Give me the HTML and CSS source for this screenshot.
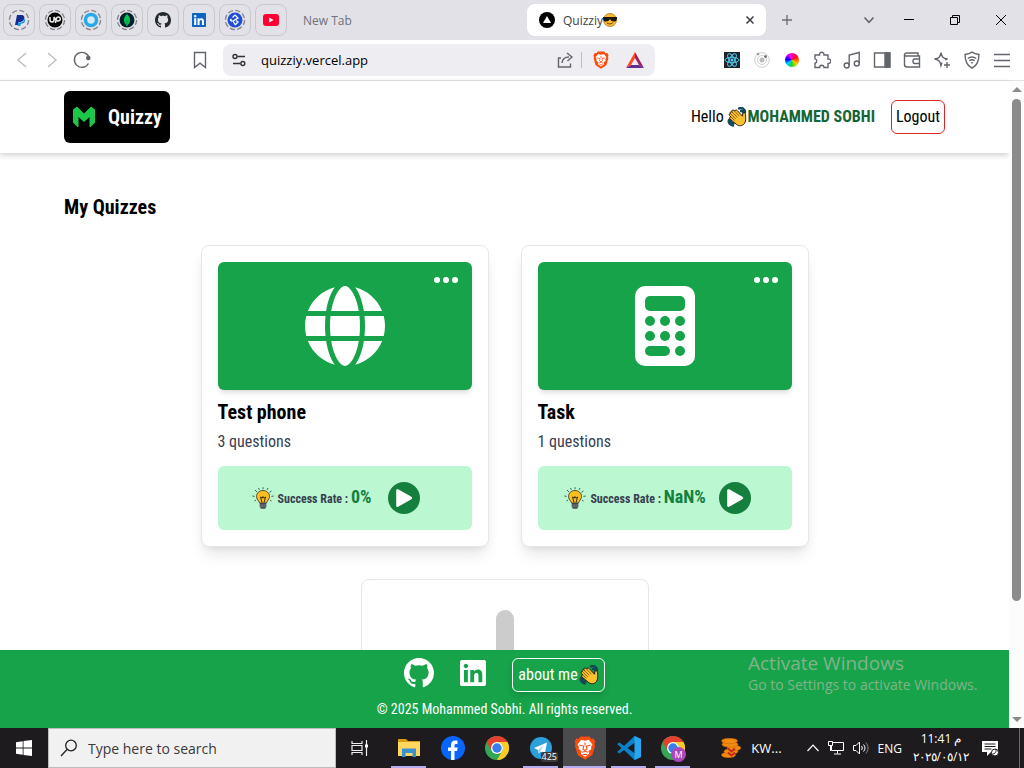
FILE: index.html
```html
<!DOCTYPE html>
<html lang="en">
<head>
<meta charset="utf-8">
<meta name="viewport" content="width=device-width, initial-scale=1">
<title>Quizziy</title>
<link rel="stylesheet" href="styles.css">
</head>
<body>
<svg class="defs" aria-hidden="true">
  <symbol id="github" viewBox="0 0 16 16"><path d="M8 0C3.58 0 0 3.58 0 8c0 3.54 2.29 6.53 5.47 7.59.4.07.55-.17.55-.38 0-.19-.01-.82-.01-1.49-2.01.37-2.53-.49-2.69-.94-.09-.23-.48-.94-.82-1.13-.28-.15-.68-.52-.01-.53.63-.01 1.08.58 1.23.82.72 1.21 1.87.87 2.33.66.07-.52.28-.87.51-1.07-1.78-.2-3.64-.89-3.64-3.95 0-.87.31-1.59.82-2.15-.08-.2-.36-1.02.08-2.12 0 0 .67-.21 2.2.82.64-.18 1.32-.27 2-.27s1.36.09 2 .27c1.53-1.04 2.2-.82 2.2-.82.44 1.1.16 1.92.08 2.12.51.56.82 1.27.82 2.15 0 3.07-1.87 3.75-3.65 3.95.29.25.54.73.54 1.48 0 1.07-.01 1.93-.01 2.2 0 .21.15.46.55.38A8.01 8.01 0 0 0 16 8c0-4.42-3.58-8-8-8z"/></symbol>
  <symbol id="linkedin" viewBox="0 32 448 448"><path d="M416 32H31.9C14.3 32 0 46.5 0 64.3v383.4C0 465.5 14.3 480 31.9 480H416c17.6 0 32-14.5 32-32.3V64.3c0-17.8-14.4-32.3-32-32.3zM135.4 416H69V202.2h66.5V416zm-33.2-243c-21.3 0-38.5-17.3-38.5-38.5S80.9 96 102.2 96c21.2 0 38.5 17.3 38.5 38.5 0 21.3-17.2 38.5-38.5 38.5zm282.1 243h-66.4V312c0-24.8-.5-56.7-34.5-56.7-34.6 0-39.9 27-39.9 54.9V416h-66.4V202.2h63.7v29.2h.9c8.9-16.8 30.6-34.5 62.9-34.5 67.2 0 79.7 44.3 79.7 101.9V416z"/></symbol>
  <symbol id="ring" viewBox="0 0 24 24"><circle cx="12" cy="12" r="9.6" fill="none" stroke="#85858b" stroke-width="1.3" stroke-dasharray="5.2 2.34"/></symbol>
  <symbol id="hand" viewBox="0 0 20 20">
    <path d="M12 1.500c2.500-1.500 6 .5 6 4M14 4c1.500-.2 2 .6 2.500 2M2 13c-1 2.500 1 5 4 5.500M3.500 13c0 2 1 3 3 3.500" fill="none" stroke="#14485a" stroke-width="2.400" stroke-linecap="round"/>
    <path d="M3.200 5.300c.8-.8 1.600-.5 2.200.1l-.5-.9c-.5-1 .9-2.200 2-1.200l1 .8c.2-1.300 1.700-1.500 2.400-.5l5.200 5.600c.2-1.700 0-3 1.200-3.400 1.300-.4 1.900 1 1.900 2.300.1 3.500.6 6.300-1.300 8.600-2.200 2.600-5.600 2.600-8 .6L3 12c-1-1-.2-2.300.9-2L2.500 8.500c-1-1.100 0-2.200 1.100-1.900-.8-.4-.8-.9-.4-1.300z" fill="#fbc02d" stroke="#241b0d" stroke-width="1"/>
    <path d="M5.300 5.500l5 4.800M7.500 4.100l4.800 4.900M3.700 7l5 4.700M4 10l3.500 3.200" fill="none" stroke="#6e4b0c" stroke-width=".8"/>
  </symbol>
  <symbol id="bulb" viewBox="0 0 22 22">
    <path d="M3 3l2 2M6.500 1l.8 1.800M11 .2v2M16 1l-.9 1.800M19.500 4l-2 1.300M.3 9l2.300.4M21.700 9l-2.300.4M2.500 14l1.600-1M19.500 14L18 13" stroke="#344d48" stroke-width=".9"/>
    <path d="M11 3.500c-4 0-6.500 2.700-6.500 6 0 3 2.500 4 3 6.500h7c.5-2.500 3-3.500 3-6.500 0-3.300-2.500-6-6.500-6z" fill="#fbbd20" stroke="#453f2a" stroke-width=".9"/>
    <path d="M10 15.500L8.500 10l1.700 1.200L11 9.500l1 1.700 1.600-1.200-1.500 5.500" fill="none" stroke="#3c3215" stroke-width="1"/>
    <path d="M7.700 16h6.600v4L13 21.700H9L7.700 20z" fill="#40474d"/><path d="M8 18h6M8 19.800h6" stroke="#8b9595" stroke-width=".7"/>
  </symbol>
  <symbol id="play" viewBox="0 0 32 32"><circle cx="16" cy="16" r="16" fill="#15803d"/><path d="M9.500 8.500v15.200L22.800 16z" fill="#fff" stroke="#fff" stroke-width="2.600" stroke-linejoin="round"/></symbol>
  <symbol id="brave" viewBox="0 0 20 22">
    <path d="M6 .5h8l1.800 2 2-.2L19.500 5l-.8 2 .5 2.200-2.500 8.300L10 21.800l-6.700-4.300L.8 9.200 1.300 7 .5 5l1.700-2.700 2 .2z" fill="#fb4b0e"/>
    <path d="M6.500 3.500L10 4.300l3.500-.8 3.300 4.200-1.300 2.500.3 1.800-2.700 2 .7 2.200L10 19l-3.800-2.800.7-2.200-2.700-2 .3-1.800-1.300-2.500z" fill="#fff"/>
    <path d="M4.800 8.200l4 1-.6 2.800 1.800 1.300 1.800-1.300-.6-2.800 4-1M10 6v2.500M7.500 15l2.500-1.300 2.500 1.300M8 17h4" fill="none" stroke="#fb4b0e" stroke-width="1"/>
  </symbol>
  <symbol id="chrome" viewBox="0 0 24 24">
    <circle cx="12" cy="12" r="12" fill="#35a653"/>
    <path d="M12 0a12 12 0 0 1 10.400 6H12a6 6 0 0 0-5.200 9L1.600 6A12 12 0 0 1 12 0z" fill="#e5402e"/>
    <path d="M22.400 6A12 12 0 0 1 12 24l5.200-9A6 6 0 0 0 12 6z" fill="#fdca24"/>
    <circle cx="12" cy="12" r="6" fill="#fff"/><circle cx="12" cy="12" r="4.700" fill="#397cec"/>
  </symbol>
</svg>

<div class="tabstrip">
  <div class="pinned">
    <button class="pin" aria-label="PayPal"><svg><use href="#ring"/><path d="M10 7h4c3 0 4 2 3 4.300-.7 2-2 2.700-4 2.700h-1.500L11 17H8z" fill="#142c8e"/><path d="M12.500 14.500c3 0 4.800-1 5-4 .8 1 .9 2 .4 3-.6 1.500-2 2.200-4 2.200L13.200 18h-2.700l.6-3.500z" fill="#1894e6"/></svg></button>
    <button class="pin" aria-label="Upwork"><svg><use href="#ring"/><circle cx="12" cy="12" r="7.500" fill="#050505"/><path d="M7 9v3c0 2.500 4 2.500 4 0V9c1 2 2 4 4 4 3 0 3-4 .3-4-2 0-2.300 2-2.800 6" fill="none" stroke="#eee" stroke-width="1.500"/></svg></button>
    <button class="pin" aria-label="Circle"><svg><use href="#ring"/><circle cx="12" cy="12" r="5.500" fill="#d8eaf3" stroke="#25a9e8" stroke-width="3.500"/></svg></button>
    <button class="pin" aria-label="MongoDB"><svg><use href="#ring"/><circle cx="12" cy="12" r="7.500" fill="#02202d"/><path d="M12 6c4 4 4 8 0 12-4-4-4-8 0-12z" fill="#00c853"/><path d="M12 12v6" stroke="#059243"/></svg></button>
    <button class="pin" aria-label="GitHub"><svg><use href="#github" x="4" y="4" width="16" height="16" fill="#24292e"/></svg></button>
    <button class="pin" aria-label="LinkedIn"><svg><rect x="6" y="6" width="12" height="12" fill="#fff"/><use href="#linkedin" x="5" y="5" width="14" height="14" fill="#0a66c2"/></svg></button>
    <button class="pin" aria-label="Diamond"><svg><use href="#ring"/><circle cx="12" cy="12" r="7.500" fill="#1d4fd6"/><path d="M12 7l3 3-5 3 2 3.500M12 7l-2.500 2.500M12 17l3-3-2-1.500M8.500 11l-1 1 1.500 1.500" fill="none" stroke="#fff" stroke-width="1.300"/></svg></button>
    <button class="pin" aria-label="YouTube"><svg><rect x="4" y="6" width="16" height="12" rx="3" fill="#ff0033"/><path d="M10.200 9.500v5l4.400-2.500z" fill="#fff"/></svg></button>
  </div>
  <div class="tab">New Tab</div>
  <div class="tab tab-active">
    <svg width="16" height="16" viewBox="0 0 16 16"><circle cx="8" cy="8" r="8"/><path d="M8 4l4 7H4z" fill="#fff"/></svg>
    <span class="tab-title">Quizziy<svg width="14" height="14" viewBox="0 0 14 14" role="img" aria-label="cool face"><circle cx="7" cy="7" r="6.500" fill="#fdb92e" stroke="#9c6415" stroke-width=".7"/><path d="M0 4h14v1.500c-.6 2.700-1.400 3-3 3-1.700 0-2.900-.7-4-2.500-1.100 1.800-2.300 2.500-4 2.500-1.600 0-2.400-.3-3-3z" fill="#191919"/><path d="M4 10c2 1.300 4.500 1.200 6-.5" fill="none" stroke="#6d3f09"/></svg></span>
    <button class="plain" aria-label="Close tab"><svg width="10" height="10" viewBox="0 0 10 10"><path d="M1.500 1.500l7 7M8.500 1.500l-7 7" stroke="#3f4146" stroke-width="1.600"/></svg></button>
  </div>
  <button class="plain newtab" aria-label="New tab"><svg width="12" height="12" viewBox="0 0 12 12"><path d="M6 1v10M1 6h10" stroke="#6b6d73" stroke-width="1.300"/></svg></button>
  <div class="window-buttons">
    <button class="plain" aria-label="Search tabs"><svg width="12" height="12" viewBox="0 0 12 12"><path d="M1.500 3.500L6 8.300l4.500-4.800" fill="none" stroke="#606269" stroke-width="1.500"/></svg></button>
    <button class="plain" aria-label="Minimize"><svg width="12" height="12" viewBox="0 0 12 12"><path d="M1 5.500h10" stroke="#000"/></svg></button>
    <button class="plain" aria-label="Restore"><svg width="12" height="12" viewBox="0 0 12 12"><path d="M1.500 3.500h7v7h-7zM3.500 3V1.500h7v7H9" fill="none" stroke="#000"/></svg></button>
    <button class="plain" aria-label="Close"><svg width="12" height="12" viewBox="0 0 12 12"><path d="M1 1l10 10M11 1L1 11" stroke="#000"/></svg></button>
  </div>
</div>

<div class="toolbar">
  <div class="nav">
    <button class="plain" aria-label="Back"><svg class="i20 faint"><path d="M14 3L6 10l8 7"/></svg></button>
    <button class="plain" aria-label="Forward"><svg class="i20 faint"><path d="M6 3l8 7-8 7"/></svg></button>
    <button class="plain" aria-label="Reload"><svg class="i20"><path d="M16.500 13.500a7.500 7.500 0 1 1 .8-5"/><circle cx="16.300" cy="8" r="1.600" fill="#62656c"/></svg></button>
    <button class="plain bookmark" aria-label="Bookmark"><svg class="i20"><path d="M4.500 2.500h11v15L10 13.200l-5.500 4.300z"/></svg></button>
  </div>
  <div class="address">
    <svg class="i16"><path d="M6.500 4.500H14M2 11.500h7" stroke="#303238"/><circle cx="4" cy="4.500" r="2" stroke="#303238"/><circle cx="11.800" cy="11.500" r="2" stroke="#303238"/></svg>
    <input class="url" type="text" value="quizziy.vercel.app" aria-label="Address">
    <button class="plain" aria-label="Share"><svg class="i16"><path d="M4 6H1.500v9h12v-3.500M5 11c.4-4 3-6 7-6M10 1l5 4-4.500 4" /></svg></button>
    <span class="divider"></span>
    <button class="plain" aria-label="Brave Shields"><svg width="16" height="18"><use href="#brave"/></svg></button>
    <button class="plain" aria-label="Rewards"><svg width="18" height="16" viewBox="0 0 18 16"><path d="M9 0L0 16l5-3 4-7z" fill="#ff4724"/><path d="M9 0l9 16-5-3-4-7z" fill="#9e1f63"/><path d="M0 16h18l-5-3H5z" fill="#662d91"/></svg></button>
  </div>
  <div class="extensions">
    <button class="plain" aria-label="React tools"><svg width="16" height="16" viewBox="0 0 16 16"><path fill="#20232a" d="M0 0h16v16H0z"/><g fill="none" stroke="#53c9ec"><ellipse cx="8" cy="8" rx="7" ry="2.700"/><ellipse cx="8" cy="8" rx="7" ry="2.700" transform="rotate(60 8 8)"/><ellipse cx="8" cy="8" rx="7" ry="2.700" transform="rotate(120 8 8)"/></g><circle cx="8" cy="8" r="1.500" fill="#53c9ec"/></svg></button>
    <button class="plain" aria-label="Orbit"><svg width="16" height="16" viewBox="0 0 16 16"><g fill="none" stroke="#cfcfcf"><circle cx="8" cy="8" r="7.300"/><circle cx="8" cy="8" r="4.500"/></g><circle cx="8" cy="8" r="2.500" fill="#bdbdbd"/><circle cx="11.500" cy="4.500" r="1.500" fill="#777"/><circle cx="4" cy="2" r="1.300" fill="#999"/></svg></button>
    <button class="plain" aria-label="Color picker"><span class="wheel"></span></button>
    <button class="plain" aria-label="Extensions"><svg class="i18"><path d="M2 4h4.500a2.300 2.300 0 1 1 4.500 0h4v4a2.300 2.300 0 1 1 0 4.500v4h-4a2.200 2.200 0 0 0-4.400 0H2v-4.300a2.200 2.200 0 0 0 0-4.300z"/></svg></button>
    <button class="plain" aria-label="Media"><svg class="i18"><circle cx="3.700" cy="14.500" r="2.500"/><circle cx="13.800" cy="12.500" r="2.500"/><path d="M6.200 14.500V4l10-2.500v11"/></svg></button>
    <button class="plain" aria-label="Sidebar"><svg class="i18"><path d="M1.500 2h15v14h-15z"/><path d="M12 2h5v14h-5z" fill="#62656c"/></svg></button>
    <button class="plain" aria-label="Wallet"><svg class="i18"><path d="M15 5V2H3.500C2 2 1.500 3 1.500 4v9.500c0 1.500 1 2.500 2.500 2.500h12.500V5H3C2 5 1.500 4.500 1.500 3.500M16.500 8h-5c-2 0-2 4.500 0 4.500h5"/></svg></button>
    <button class="plain" aria-label="Leo"><svg class="i18"><path d="M8 1.500c.8 4.500 2 5.800 6.500 6.500l-2.500.8M8 1.500C7.200 6 6 7.300 1.500 8 6 8.800 7.200 10.200 8 14.500l1-3M14 11v6M11 14h6"/></svg></button>
    <button class="plain" aria-label="VPN"><svg class="i18"><path d="M9 1.200c2.500 1.600 4.700 2 7 2.300-.3 6.500-1.500 10.500-7 13.700C3.500 14 2.300 10 2 3.500 4.300 3.200 6.500 2.800 9 1.200zM4.800 7.500c2.700-2 5.700-2 8.400 0M6.300 9.800c1.800-1.300 3.600-1.300 5.400 0M8 12c.7-.5 1.300-.5 2 0"/></svg></button>
    <button class="plain" aria-label="Menu"><svg class="i18"><path d="M1 3.500h16M1 9.500h16M1 15.500h16"/></svg></button>
  </div>
</div>

<div class="viewport">
  <div class="page">
    <header class="header">
      <a class="logo" href="#"><svg width="22" height="22" viewBox="0 0 22 22"><path d="M0 3.500L4 .5l7 7 7-7 4 3v13L17.500 21h-1V11L11 16l-5.500-5v10h-1L0 16.500z" fill="#1cc649"/></svg><span>Quizzy</span></a>
      <div class="account">
        <p class="hello">Hello <svg width="20" height="20"><use href="#hand"/></svg><strong>MOHAMMED SOBHI</strong></p>
        <button class="logout">Logout</button>
      </div>
    </header>
    <main class="main">
      <h1 class="heading">My Quizzes</h1>
      <div class="cards">
        <article class="card">
          <div class="tile">
            <svg width="80" height="80" viewBox="0 0 512 512" fill="#fff"><path d="M352 256c0 22.200-1.200 43.600-3.300 64H163.300c-2.200-20.400-3.300-41.800-3.300-64s1.200-43.600 3.300-64h185.300c2.200 20.400 3.300 41.800 3.300 64zm28.800-64H503.900c5.300 20.500 8.100 41.900 8.100 64s-2.800 43.500-8.100 64H380.800c2.100-20.600 3.200-42 3.200-64s-1.100-43.400-3.200-64zm112.600-32H376.700c-10-63.900-29.800-117.400-55.300-151.600 78.300 20.700 142 77.500 171.900 151.600zm-149.100 0H167.700c6.100-36.400 15.500-68.600 27-94.700 10.500-23.600 22.200-40.700 33.500-51.500C239.400 3.200 248.700 0 256 0s16.600 3.200 27.800 13.800c11.300 10.800 23 27.900 33.500 51.500 11.600 26 20.900 58.200 27 94.700zm-209 0H18.600C48.600 85.900 112.200 29.100 190.600 8.400 165.100 42.600 145.300 96.100 135.300 160zM8.100 192H131.200c-2.100 20.600-3.200 42-3.200 64s1.100 43.400 3.200 64H8.100C2.800 299.500 0 278.100 0 256s2.800-43.500 8.100-64zM194.700 446.600c-11.600-26-20.900-58.200-27-94.600H344.300c-6.100 36.400-15.500 68.600-27 94.600-10.500 23.600-22.200 40.700-33.500 51.500C272.600 508.800 263.300 512 256 512s-16.600-3.200-27.800-13.800c-11.300-10.800-23-27.900-33.500-51.500zM135.300 352c10 63.900 29.800 117.400 55.300 151.600C112.200 482.900 48.600 426.100 18.600 352H135.300zm358.100 0c-30 74.100-93.600 130.900-171.900 151.600 25.500-34.200 45.200-87.700 55.300-151.600H493.400z"/></svg>
            <button class="plain more" aria-label="More options"><svg width="24" height="6" viewBox="0 0 24 6" fill="#fff"><circle cx="3" cy="3" r="3"/><circle cx="12" cy="3" r="3"/><circle cx="21" cy="3" r="3"/></svg></button>
          </div>
          <h2 class="title">Test phone</h2>
          <p class="count">3 questions</p>
          <div class="rate"><div class="rate-info"><svg width="22" height="22"><use href="#bulb"/></svg><p class="rate-label">Success Rate : <strong>0%</strong></p></div><i class="gap"></i><button class="plain" aria-label="Play"><svg width="32" height="32"><use href="#play"/></svg></button></div>
        </article>
        <article class="card">
          <div class="tile">
            <svg width="60" height="80" viewBox="0 0 60 80"><rect width="60" height="80" rx="10" fill="#fff"/><g fill="#16a34a"><rect x="10" y="10" width="40" height="15" rx="5"/><circle cx="15" cy="35" r="5"/><circle cx="30" cy="35" r="5"/><circle cx="45" cy="35" r="5"/><circle cx="15" cy="50" r="5"/><circle cx="30" cy="50" r="5"/><circle cx="45" cy="50" r="5"/><rect x="10" y="60" width="25" height="10" rx="5"/><circle cx="45" cy="65" r="5"/></g></svg>
            <button class="plain more" aria-label="More options"><svg width="24" height="6" viewBox="0 0 24 6" fill="#fff"><circle cx="3" cy="3" r="3"/><circle cx="12" cy="3" r="3"/><circle cx="21" cy="3" r="3"/></svg></button>
          </div>
          <h2 class="title">Task</h2>
          <p class="count">1 questions</p>
          <div class="rate"><div class="rate-info"><svg width="22" height="22"><use href="#bulb"/></svg><p class="rate-label">Success Rate : <strong>NaN%</strong></p></div><i class="gap"></i><button class="plain" aria-label="Play"><svg width="32" height="32"><use href="#play"/></svg></button></div>
        </article>
        <button class="card card-new" aria-label="Add quiz"><span class="plus"></span></button>
      </div>
    </main>
    <footer class="footer">
      <div class="links">
        <a class="social" href="#" aria-label="GitHub"><svg width="30" height="30" fill="#fff"><use href="#github"/></svg></a>
        <a class="social" href="#" aria-label="LinkedIn"><svg width="26" height="26" fill="#fff"><use href="#linkedin"/></svg></a>
        <button class="about">about me<svg width="20" height="20"><use href="#hand"/></svg></button>
      </div>
      <p class="copyright">© 2025 Mohammed Sobhi. All rights reserved.</p>
    </footer>
  </div>
  <div class="scrollbar"><i class="arrow up"></i><i class="thumb"></i><i class="arrow down"></i></div>
  <div class="watermark"><p class="wm-title">Activate Windows</p><p class="wm-text">Go to Settings to activate Windows.</p></div>
</div>

<div class="taskbar">
  <button class="plain start" aria-label="Start"><svg width="16" height="16" viewBox="0 0 16 16" fill="#fff"><path d="M0 2.200L6.700 1.200v6.400H0zM7.500 1.100L16 0v7.600H7.500zM0 8.400h6.700v6.400L0 13.800zM7.500 8.400H16V16l-8.500-1.100z"/></svg></button>
  <label class="search"><svg width="18" height="18" viewBox="0 0 18 18" fill="none" stroke="#222" stroke-width="1.300"><circle cx="11" cy="6.500" r="5.300"/><path d="M7 10.500L1 17"/></svg><input type="text" placeholder="Type here to search" aria-label="Search Windows"></label>
  <button class="plain taskview" aria-label="Task view"><svg width="18" height="16" viewBox="0 0 18 16" fill="none" stroke="#eee" stroke-width="1.200"><path d="M1 1v2.500h10V1M1 15v-2.500h10V15M1 5.500h10v5H1zM15.500 0v16"/><path d="M14 4.500h3v3h-3z" fill="#fff" stroke="none"/></svg></button>
  <div class="apps">
    <button class="app open" aria-label="File Explorer"><svg width="24" height="24" viewBox="0 0 24 24"><path d="M1 3h8l2 2h12v15H1z" fill="#d99b16"/><path d="M1 6h22v14H1z" fill="#ffd75e"/><path d="M5 12.500h14V21h-3.500v-4h-7v4H5z" fill="#3991d2"/></svg></button>
    <button class="app" aria-label="Facebook"><svg width="24" height="24" viewBox="0 0 24 24"><circle cx="12" cy="12" r="12" fill="#0866ff"/><path d="M10 24v-9H7v-3.500h3V9c0-3.500 2-5 6.500-4.300V8C14 7.800 13.500 8.300 13.500 9.500v2h3.200L16 15h-2.500v9z" fill="#fff"/></svg></button>
    <button class="app" aria-label="Chrome"><svg width="24" height="24"><use href="#chrome"/></svg></button>
    <button class="app open" aria-label="Telegram, 425 unread"><svg width="22" height="22" viewBox="0 0 22 22"><circle cx="11" cy="11" r="11" fill="#2ba0da"/><path d="M4 11l13-5.500-2.300 12-4-3-2 2-.7-3.500z" fill="#fff"/><path d="M8.300 13L14 8l-3.700 5.500-1.300 2.500z" fill="#9cc9e2"/></svg><span class="unread">425</span></button>
    <button class="app open current" aria-label="Brave"><svg width="22" height="24"><use href="#brave"/></svg></button>
    <button class="app open" aria-label="Visual Studio Code"><svg width="24" height="24" viewBox="0 0 24 24"><path d="M17.500 0L24 3v18l-6.500 3L7 14l-4.500 3.500L0 16l4.500-4L0 8l2.500-1.500L7 10zM18 6.500L10.500 12l7.500 5.500z" fill="#0b82ca" fill-rule="evenodd"/><path d="M17.500 0L24 3v18l-6.500 3z" fill="#27a6f2"/></svg></button>
    <button class="app open" aria-label="Chrome profile M"><svg width="24" height="24"><use href="#chrome"/></svg><span class="profile">M</span></button>
  </div>
  <div class="tray">
    <button class="plain news"><svg width="20" height="20" viewBox="0 0 20 20"><g fill="#f28a0e" stroke="#c4650a" stroke-width=".5"><ellipse cx="7.500" cy="17" rx="7" ry="2.700"/><ellipse cx="10" cy="13.500" rx="7" ry="2.700"/><ellipse cx="13" cy="10" rx="6.800" ry="2.700"/><ellipse cx="9" cy="6.500" rx="8" ry="2.700"/><ellipse cx="8.500" cy="3" rx="8" ry="2.700"/></g><path d="M7 10.500l3.500 3 3.500-3M7 14.500l3.500 3 3.500-3" fill="none" stroke="#c52b16" stroke-width="2"/></svg><span>KW...</span></button>
    <button class="plain" aria-label="Show hidden icons"><svg width="12" height="8" viewBox="0 0 12 8"><path d="M.5 7L6 1.200 11.500 7" fill="none" stroke="#fff" stroke-width="1.200"/></svg></button>
    <button class="plain" aria-label="Network"><svg width="16" height="14" viewBox="0 0 16 14" fill="none" stroke="#fff"><path d="M4.500 1.500h11v8H3.500V5M9.500 9.500v3M6 13h7M.5.500h4v4h-4zM2.500 4v6"/></svg></button>
    <button class="plain" aria-label="Volume"><svg width="16" height="14" viewBox="0 0 16 14" fill="none" stroke="#fff"><path d="M.5 4.500H3L6.500 1v12L3 9.500H.5zM8.500 5c1 1.300 1 2.700 0 4M10.500 3.500c2 2 2 5 0 7"/><path d="M12.800 1.500c3 3.300 3 7.700 0 11" stroke="#888"/></svg></button>
    <button class="plain lang">ENG</button>
    <div class="clock"><span>11:41 م</span><span>٢٠٢٥/٠٥/١٢</span></div>
    <button class="plain notice" aria-label="Notifications"><svg width="17" height="17" viewBox="0 0 17 17"><path d="M0 1h16v11H9l-4 4v-4H0z" fill="#fff"/><path d="M2.500 4h11M2.500 6.500h11M2.500 9h7" stroke="#1d1d1d"/><circle cx="13" cy="12.500" r="3.500" fill="#fff" stroke="#1d1d1d"/><path d="M13 9c2 2 1 4-2 5" fill="none" stroke="#1d1d1d"/></svg></button>
    <button class="plain show-desktop" aria-label="Show desktop"></button>
  </div>
</div>
</body>
</html>
```
FILE: styles.css
```css
* { box-sizing: border-box; }
body {
  margin: 0;
  height: 100vh;
  display: flex;
  flex-direction: column;
  overflow: hidden;
  font-family: "Open Sans", "Noto Sans", sans-serif;
  font-size: 12px;
  color: #000;
}
h1, h2, p { margin: 0; }
button, input { font: inherit; color: inherit; }
svg { display: block; flex: none; }
.defs { position: absolute; width: 0; height: 0; }
.plain { display: flex; align-items: center; justify-content: center; border: 0; padding: 0; background: none; }

/* tab strip */
.tabstrip { flex: none; height: 40px; display: flex; align-items: center; padding: 0 0 0 3px; background: #e2e1e7; }
.pinned { display: flex; gap: 4px; }
.pin { width: 32px; height: 32px; padding: 3px; border: 1px solid #c8c8cd; border-radius: 8px; background: none; }
.pin svg { width: 24px; height: 24px; }
.tab { flex: 1; padding-left: 16px; color: #6f7178; }
.tab-active { display: flex; align-items: center; gap: 8px; height: 32px; margin-left: 8px; padding: 0 11px 0 12px; border-radius: 8px; background: #fff; color: #3f4146; }
.tab-title { flex: 1; display: flex; align-items: center; }
.newtab { width: 42px; }
.window-buttons { display: flex; margin-left: 44px; }
.window-buttons .plain { width: 46px; height: 40px; }
.window-buttons .plain:first-child { width: 34px; }

/* toolbar */
.toolbar { flex: none; height: 41px; display: flex; align-items: center; background: #fff; border-bottom: 1px solid #e2e1e7; }
.nav { width: 223px; display: flex; gap: 10px; padding: 0 13px 0 12px; }
.bookmark { margin-left: auto; }
.i20, .i18, .i16 { fill: none; stroke: #62656c; stroke-width: 1.400; }
.i20 { width: 20px; height: 20px; }
.i18 { width: 18px; height: 18px; }
.i16 { width: 16px; height: 16px; }
.faint { stroke: #bcbdc2; }
.address { flex: 1; min-width: 0; height: 32px; display: flex; align-items: center; gap: 10px; padding: 0 11px 0 8px; border-radius: 8px; background: #eeedf2; }
.url { flex: 1; min-width: 0; border: 0; padding: 0 4px; background: none; font-size: 13px; }
.divider { width: 1px; height: 16px; background: #bdbdc4; margin: 0 1px 0 -2px; }
.address .plain:last-child { margin-left: 7px; }
.extensions { width: 369px; display: flex; justify-content: flex-end; gap: 2px; padding-right: 8px; }
.extensions .plain { width: 28px; height: 28px; }
.wheel { width: 14px; height: 14px; border-radius: 50%; background: conic-gradient(#f0a, #f03 14%, #f40 22%, #fc0 36%, #5d0 46%, #0c6 54%, #0df 64%, #00f 76%, #80f 86%, #f0f 94%, #f0a); }

/* browser viewport */
.viewport { position: relative; flex: 1; min-height: 0; display: flex; background: #fff; }
.page { flex: 1; min-width: 0; display: flex; flex-direction: column; font-family: "Roboto Condensed", "Liberation Sans Narrow", "Roboto", sans-serif; font-size: 16px; line-height: 24px; }
.header { flex: none; display: flex; align-items: center; justify-content: space-between; padding: 10px 64px; box-shadow: 0 2px 6px rgba(0, 0, 0, .2); }
.logo { display: flex; align-items: center; gap: 13px; height: 52px; padding: 0 8px 0 9px; border-radius: 6px; background: #000; color: #fff; font-size: 20px; font-weight: 700; text-decoration: none; }
.account { display: flex; align-items: center; gap: 16px; }
.hello { display: flex; align-items: center; white-space: pre; }
.hello strong { color: #166534; }
.logout { height: 34px; padding: 0 4px; border: 1px solid #dc2626; border-radius: 6px; background: #fff; }
.main { flex: 1; min-height: 0; overflow: hidden; padding: 40px 64px 0; }
.heading { font-size: 20px; line-height: 28px; font-weight: 700; }
.cards { display: flex; flex-wrap: wrap; justify-content: center; gap: 32px; padding-top: 24px; }
.card { width: 288px; padding: 16px; border: 1px solid #e5e7eb; border-radius: 8px; background: #fff; box-shadow: 0 10px 15px -3px rgba(0, 0, 0, .1), 0 4px 6px -4px rgba(0, 0, 0, .1); }
.tile { position: relative; height: 128px; display: flex; align-items: center; justify-content: center; border-radius: 6px; background: #16a34a; box-shadow: 0 4px 6px -1px rgba(0, 0, 0, .1), 0 2px 4px -2px rgba(0, 0, 0, .1); }
.more { position: absolute; top: 15px; right: 14px; }
.title { margin-top: 8px; font-size: 20px; line-height: 28px; font-weight: 700; }
.count { margin-top: 4px; color: #374151; }
.rate { display: flex; align-items: center; height: 64px; margin-top: 12px; border-radius: 6px; background: #bbf7d0; }
.rate::before { content: ""; flex: 2; }
.rate::after { content: ""; flex: 3; }
.gap { flex: 1; }
.rate-info { display: flex; align-items: center; gap: 4px; }
.rate-label { font-size: 12px; line-height: 28px; font-weight: 700; color: #374151; white-space: nowrap; }
.rate-label strong { font-size: 18px; font-weight: 700; color: #15803d; }
.card-new { display: flex; justify-content: center; height: 302px; padding-top: 30px; box-shadow: none; }
.plus { width: 18px; height: 240px; border-radius: 9px; background: #ccc; }
.footer { flex: none; display: flex; flex-direction: column; align-items: center; gap: 7px; padding: 8px 0 9px; background: #16a34a; color: #fff; }
.links { display: flex; align-items: flex-start; gap: 26px; }
.social { display: flex; align-items: center; height: 30px; }
.about { display: flex; align-items: center; gap: 1px; height: 34px; padding: 0 5px; border: 1px solid #fff; border-radius: 6px; background: none; box-shadow: 0 4px 6px rgba(0, 0, 0, .12); }
.copyright { font-size: 14px; line-height: 20px; }
.scrollbar { width: 15px; display: flex; flex-direction: column; align-items: center; padding: 6px 0; background: #fcfcfc; }
.arrow { border: 5px solid transparent; }
.up { border-top: 0; border-bottom: 5px solid #8b8b8b; }
.down { border-bottom: 0; border-top: 5px solid #8b8b8b; }
.thumb { flex: none; width: 9px; height: 79%; margin: 7px 0 auto; border-radius: 5px; background: #8b8b8b; }
.watermark { position: absolute; right: 40px; bottom: 33px; color: #81b38b; width: 236px; }
.wm-title { font-size: 19px; line-height: 24px; }
.wm-text { font-size: 14px; line-height: 20px; white-space: nowrap; }

/* taskbar */
.taskbar { flex: none; height: 40px; display: flex; background: #1d1b1e; color: #fff; }
.start { width: 48px; }
.search { width: 288px; display: flex; align-items: center; gap: 10px; padding: 0 11px; border: 1px solid #bdbdbd; background: #f1f1f1; }
.search input { flex: 1; min-width: 0; border: 0; padding: 0; background: none; font-size: 14px; }
.search input::placeholder { color: #3a3a3a; opacity: 1; }
.taskview { width: 48px; }
.apps { display: flex; gap: 1px; margin-left: 3px; }
.app { position: relative; width: 43px; display: flex; align-items: center; justify-content: center; border: 0; padding: 0; background: none; }
.open::after { content: ""; position: absolute; left: 4px; right: 4px; bottom: 0; height: 2px; background: #b3acef; }
.current { background: #4b4a4c; }
.current::after { left: 0; right: 0; }
.unread, .profile { position: absolute; font-size: 9px; line-height: 10px; }
.unread { right: 4px; bottom: 6px; padding: 0 1px; border-radius: 2px; background: #3a3a3a; }
.profile { right: 8px; bottom: 6px; width: 15px; height: 15px; line-height: 15px; border-radius: 50%; background: #ab47bc; text-align: center; }
.tray { margin-left: auto; display: flex; align-items: center; }
.tray .plain { margin-right: 9px; }
.news { gap: 10px; padding-right: 16px; font-size: 13px; }
.lang { font-size: 12px; }
.clock { display: flex; flex-direction: column; align-items: center; width: 54px; margin: 0 14px 0 3px; line-height: 18px; }
.tray .notice { margin-right: 20px; }
.tray .show-desktop { width: 5px; height: 40px; margin-right: 0; border-left: 1px solid #6a696b; }
```
